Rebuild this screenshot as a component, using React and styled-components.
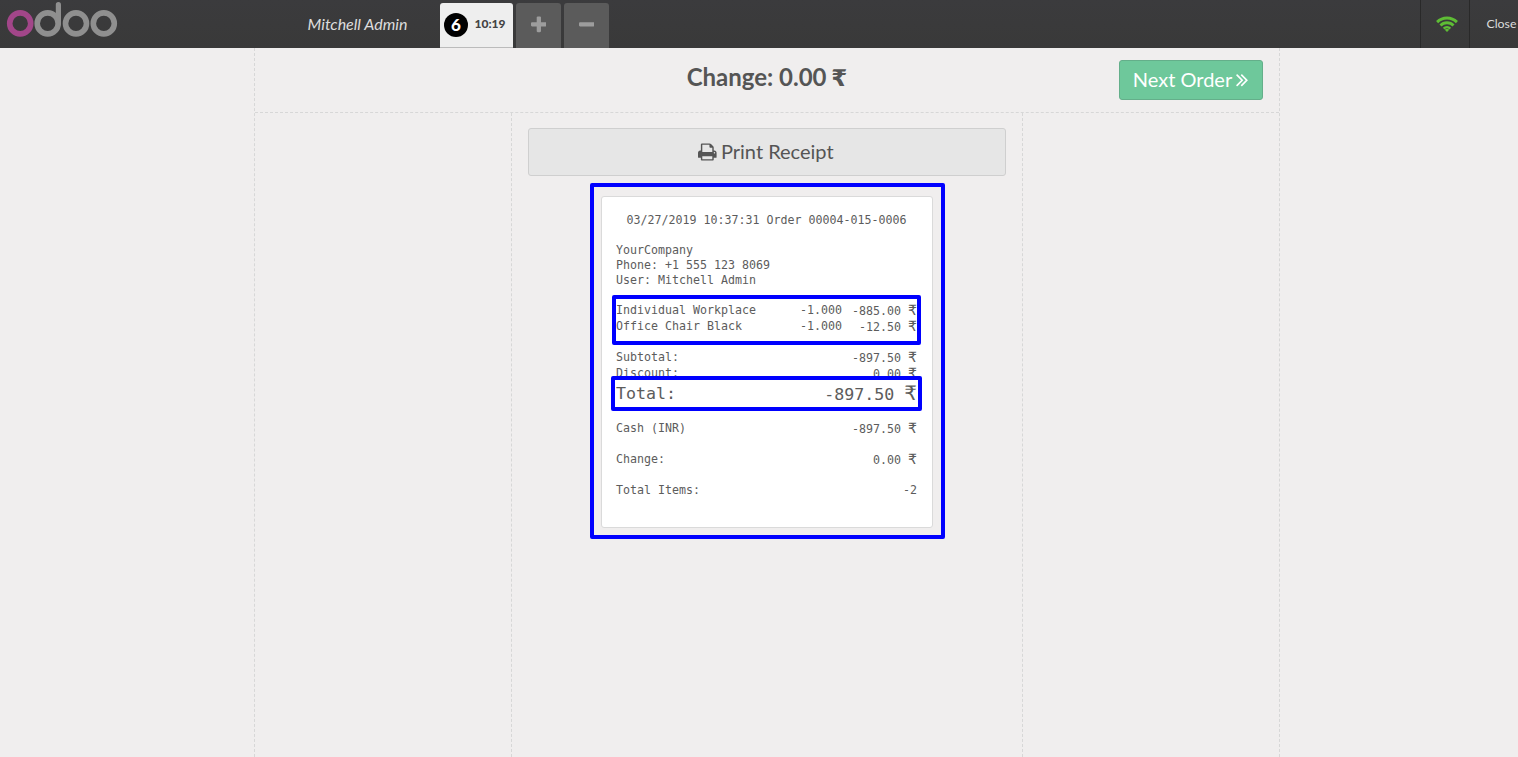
import React from "react";
import styled, { createGlobalStyle } from "styled-components";

const GlobalStyle = createGlobalStyle`
  * { box-sizing: border-box; }
  html, body { margin: 0; padding: 0; height: 100%; overflow: hidden; }
  body { background: #f0eeee; color: #555; font-family: Lato, sans-serif; }
`;

const Screen = styled.div`
  display: flex;
  flex-direction: column;
  width: 100%;
  height: 100vh;
  overflow: hidden;
`;

const TopBar = styled.header`
  display: flex;
  flex: none;
  height: 48px;
  background: linear-gradient(#3b3b3d, #393939);
`;

const Brand = styled.div`
  flex: none;
  width: 300px;
  padding: 1px 0 0 6px;
  svg { display: block; }
`;

const Cashier = styled.div`
  flex: none;
  width: 140px;
  padding-left: 7.5px;
  line-height: 47px;
  font-size: 16px;
  font-style: italic;
  color: #ddd;
`;

const Tabs = styled.nav`
  display: flex;
  align-items: flex-end;
  gap: 3px;
  flex: 1;
`;

const OrderTab = styled.div`
  display: flex;
  align-items: center;
  gap: 6.5px;
  width: 73px;
  height: 45px;
  padding-left: 4px;
  border-radius: 3px 3px 0 0;
  border-bottom: 1px solid #bbb;
  background: #eee;
  font-size: 12px;
  font-weight: 900;
  color: #444;
`;

const OrderNumber = styled.span`
  width: 24px;
  height: 24px;
  border-radius: 50%;
  background: #000;
  color: #fff;
  font-size: 17px;
  line-height: 24px;
  text-align: center;
`;

const OrderTime = styled.span`
  padding-bottom: 3px;
`;

const TabButton = styled.button`
  display: flex;
  align-items: center;
  justify-content: center;
  width: 45px;
  height: 45px;
  padding: 0 0 1px;
  border: 0;
  border-radius: 3px 3px 0 0;
  background: #5b5b5b;
  color: #9d9d9d;
`;

const StatusCell = styled.div`
  display: flex;
  align-items: center;
  flex: none;
  width: 49px;
  padding: 0 0 1px ${(p) => p.$pad}px;
  border-left: 1px solid #292929;
  font-size: 12.3px;
  color: #ddd;
`;

const PaymentScreen = styled.main`
  display: flex;
  flex-direction: column;
  flex: 1;
  width: 1026px;
  margin-left: 254px;
  border-left: 1px dashed #d7d7d7;
  border-right: 1px dashed #d7d7d7;
`;

const TitleBar = styled.div`
  display: grid;
  grid-template-columns: 1fr auto 1fr;
  height: 65px;
  padding: 12px 16px 0;
  border-bottom: 1px dashed #d7d7d7;
`;

const ChangeTitle = styled.h1`
  grid-column: 2;
  margin: 0;
  font-size: 24px;
  line-height: 34px;
  font-weight: 700;
`;

const TitleRupee = styled.span`
  font-family: "DejaVu Sans", sans-serif;
  font-size: 23px;
  line-height: 1px;
  margin-left: -1px;
`;

const Button = styled.button`
  display: flex;
  align-items: center;
  justify-content: center;
  padding: 0 1px 0 0;
  border-radius: 3px;
  font: 20px/24px Lato, sans-serif;
`;

const ButtonLabel = styled.span`
  padding-bottom: 2px;
`;

const NextButton = styled(Button)`
  gap: 4px;
  justify-self: end;
  width: 144px;
  height: 40px;
  border: 1px solid #64af8a;
  background: #6ec89b;
  color: #fff;
`;

const PrintButton = styled(Button)`
  gap: 4px;
  width: 478px;
  height: 48px;
  padding-right: 2px;
  border: 1px solid #cfcfcf;
  background: #e6e6e6;
  color: #555;
`;

const Columns = styled.div`
  display: grid;
  grid-template-columns: 256px 512px 256px;
  flex: 1;
`;

const CenterColumn = styled.section`
  grid-column: 2;
  display: flex;
  flex-direction: column;
  align-items: center;
  padding: 15px 16px 0;
  border-left: 1px dashed #d7d7d7;
  border-right: 1px dashed #d7d7d7;
`;

const Receipt = styled.article`
  position: relative;
  width: 332px;
  height: 332px;
  margin-top: 20px;
  padding: 16px 15px 0 14px;
  border: 1px solid #dadada;
  border-radius: 3px;
  background: #fff;
  color: #5c5c5c;
  font-family: "DejaVu Sans Mono", monospace;
  font-size: 11.63px;
  line-height: 15px;
  white-space: pre;
`;

const ReceiptHeading = styled.div`
  text-align: center;
  margin-bottom: 15px;
`;

const Block = styled.div`
  margin-bottom: 15px;
`;

const Line = styled.div`
  display: grid;
  grid-template-columns: 1fr auto 75px;
  height: ${(p) => (p.$large ? 24 : 16)}px;
  font-size: ${(p) => (p.$large ? 16.61 : 11.63)}px;
  line-height: ${(p) => (p.$large ? 24 : 15)}px;
`;

const Amount = styled.span`
  grid-column: 3;
  justify-self: end;
  padding-top: ${(p) => (p.$lowered ? 1 : 0)}px;
`;

const Rupee = styled.span`
  font-family: "DejaVu Sans", sans-serif;
  font-size: ${(p) => (p.$large ? 20 : 14)}px;
  line-height: 1px;
`;

const Highlight = styled.div`
  position: absolute;
  left: ${(p) => p.$x}px;
  top: ${(p) => p.$y}px;
  width: ${(p) => p.$w}px;
  height: ${(p) => p.$h}px;
  border: 4px solid #00f;
  border-radius: 2px;
  pointer-events: none;
`;

const OdooLogo = () => (
  <svg width="112" height="38" viewBox="0 0 112 38" fill="none" strokeWidth="5.6">
    <circle cx="14.2" cy="22.4" r="10.5" stroke="#a24689" />
    <g stroke="#8f8f8f">
      <circle cx="41.7" cy="22.4" r="10.5" />
      <circle cx="70" cy="22.4" r="10.5" />
      <circle cx="97.8" cy="22.4" r="10.5" />
      <path d="M52.4 22.4V3.7" strokeLinecap="round" strokeWidth="5.2" />
    </g>
  </svg>
);

const PlusIcon = () => (
  <svg width="15.7" height="20" viewBox="0 0 1408 1792" fill="currentColor">
    <path d="M1408 736v192q0 40-28 68t-68 28h-416v416q0 40-28 68t-68 28h-192q-40 0-68-28t-28-68v-416h-416q-40 0-68-28t-28-68v-192q0-40 28-68t68-28h416v-416q0-40 28-68t68-28h192q40 0 68 28t28 68v416h416q40 0 68 28t28 68z" />
  </svg>
);

const MinusIcon = () => (
  <svg width="15.7" height="20" viewBox="0 0 1408 1792" fill="currentColor">
    <path d="M1408 736v192q0 40-28 68t-68 28h-1216q-40 0-68-28t-28-68v-192q0-40 28-68t68-28h1216q40 0 68 28t28 68z" />
  </svg>
);

const WifiIcon = () => (
  <svg width="22" height="16" viewBox="0 0 22 16" fill="none" stroke="#5ebd35" strokeWidth="2.9">
    <path d="M1.1 6.1a14 14 0 0 1 19.8 0" />
    <path d="M4.5 9.5a9.2 9.2 0 0 1 13 0" />
    <path d="M7.7 12.6a4.7 4.7 0 0 1 6.6 0" strokeWidth="2.6" />
    <path d="M11 16l-2.2-2.2a3.1 3.1 0 0 1 4.4 0z" fill="#5ebd35" stroke="none" />
  </svg>
);

const PrinterIcon = () => (
  <svg width="18.6" height="20" viewBox="0 0 1664 1792" fill="currentColor">
    <path d="M384 1536h896v-256h-896v256zM384 896h896v-384h-160q-40 0-68-28t-28-68v-160h-640v640zM1536 960q0-26-19-45t-45-19-45 19-19 45 19 45 45 19 45-19 19-45zM1664 960v416q0 13-9.5 22.5t-22.5 9.5h-224v160q0 40-28 68t-68 28h-960q-40 0-68-28t-28-68v-160h-224q-13 0-22.5-9.5t-9.5-22.5v-416q0-79 56.5-135.5t135.5-56.5h64v-544q0-40 28-68t68-28h672q40 0 88 20t76 48l152 152q28 28 48 76t20 88v256h64q79 0 135.5 56.5t56.5 135.5z" />
  </svg>
);

const ChevronsIcon = () => (
  <svg width="12" height="21.7" viewBox="0 30 992 1792" fill="currentColor">
    <path d="M595 960q0 13-10 23l-466 466q-10 10-23 10t-23-10l-50-50q-10-10-10-23t10-23l393-393-393-393q-10-10-10-23t10-23l50-50q10-10 23-10t23 10l466 466q10 10 10 23zM979 960q0 13-10 23l-466 466q-10 10-23 10t-23-10l-50-50q-10-10-10-23t10-23l393-393-393-393q-10-10-10-23t10-23l50-50q10-10 23-10t23 10l466 466q10 10 10 23z" />
  </svg>
);

const ReceiptLine = ({ label, qty, amount, large, currency = true }) => (
  <Line $large={large}>
    <span>{label}</span>
    <span>{qty}</span>
    <Amount $lowered={currency}>
      {amount}
      {currency && <> <Rupee $large={large}>₹</Rupee></>}
    </Amount>
  </Line>
);

export default function App() {
  return (
    <Screen>
      <GlobalStyle />
      <TopBar>
        <Brand><OdooLogo /></Brand>
        <Cashier>Mitchell Admin</Cashier>
        <Tabs>
          <OrderTab>
            <OrderNumber>6</OrderNumber>
            <OrderTime>10:19</OrderTime>
          </OrderTab>
          <TabButton aria-label="New order"><PlusIcon /></TabButton>
          <TabButton aria-label="Remove order"><MinusIcon /></TabButton>
        </Tabs>
        <StatusCell $pad={15}><WifiIcon /></StatusCell>
        <StatusCell $pad={16.5}>Close</StatusCell>
      </TopBar>
      <PaymentScreen>
        <TitleBar>
          <ChangeTitle>Change: 0.00 <TitleRupee>₹</TitleRupee></ChangeTitle>
          <NextButton><ButtonLabel>Next Order</ButtonLabel><ChevronsIcon /></NextButton>
        </TitleBar>
        <Columns>
          <CenterColumn>
            <PrintButton><PrinterIcon /><ButtonLabel>Print Receipt</ButtonLabel></PrintButton>
            <Receipt>
              <ReceiptHeading>03/27/2019 10:37:31 Order 00004-015-0006</ReceiptHeading>
              <Block>
                <div>YourCompany</div>
                <div>Phone: +1 555 123 8069</div>
                <div>User: Mitchell Admin</div>
              </Block>
              <Block>
                <ReceiptLine label="Individual Workplace" qty="-1.000" amount="-885.00" />
                <ReceiptLine label="Office Chair Black" qty="-1.000" amount="-12.50" />
              </Block>
              <Block>
                <ReceiptLine label="Subtotal:" amount="-897.50" />
                <ReceiptLine label="Discount:" amount="0.00" />
                <ReceiptLine label="Total:" amount="-897.50" large />
              </Block>
              <Block><ReceiptLine label="Cash (INR)" amount="-897.50" /></Block>
              <Block><ReceiptLine label="Change:" amount="0.00" /></Block>
              <Block><ReceiptLine label="Total Items:" amount="-2" currency={false} /></Block>
              <Highlight $x={-12} $y={-14} $w={355} $h={356} />
              <Highlight $x={10} $y={98} $w={309} $h={50} />
              <Highlight $x={9} $y={179} $w={311} $h={35} />
            </Receipt>
          </CenterColumn>
        </Columns>
      </PaymentScreen>
    </Screen>
  );
}
